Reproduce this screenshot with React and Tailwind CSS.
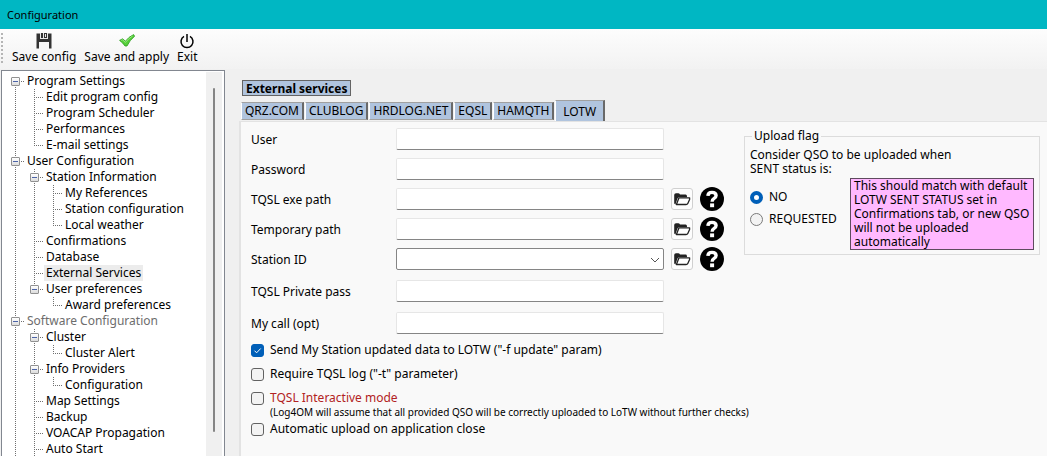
import React, { useState } from 'react'

const tree = [
  {
    label: 'Program Settings',
    children: [
      { label: 'Edit program config' },
      { label: 'Program Scheduler' },
      { label: 'Performances' },
      { label: 'E-mail settings' },
    ],
  },
  {
    label: 'User Configuration',
    children: [
      {
        label: 'Station Information',
        children: [
          { label: 'My References' },
          { label: 'Station configuration' },
          { label: 'Local weather' },
        ],
      },
      { label: 'Confirmations' },
      { label: 'Database' },
      { label: 'External Services' },
      { label: 'User preferences', children: [{ label: 'Award preferences' }] },
    ],
  },
  {
    label: 'Software Configuration',
    muted: true,
    more: true,
    children: [
      { label: 'Cluster', children: [{ label: 'Cluster Alert' }] },
      { label: 'Info Providers', children: [{ label: 'Configuration' }] },
      { label: 'Map Settings' },
      { label: 'Backup' },
      { label: 'VOACAP Propagation' },
      { label: 'Auto Start', more: true },
    ],
  },
]

const tabs = ['QRZ.COM', 'CLUBLOG', 'HRDLOG.NET', 'EQSL', 'HAMQTH', 'LOTW']

const Guide = ({ up, down, right }) => (
  <svg width="19" height="16" className="shrink-0" stroke="#6f6f6f" strokeDasharray="1 1" shapeRendering="crispEdges">
    {up && <path d="M9.5 0V8" />}
    {down && <path d="M9.5 8V16" />}
    {right && <path d="M9 8.5H18" />}
  </svg>
)

const TreeNode = ({ node, first, last, lines, selected, onSelect }) => {
  const [open, setOpen] = useState(true)
  const isSelected = selected === node.label

  return (
    <li>
      <div className="flex h-4 items-center">
        {lines.map((line, index) => (
          <Guide key={index} up={line} down={line} />
        ))}
        <div className="relative flex h-4 w-[19px] shrink-0">
          <Guide up={!first} down={!last} right />
          {node.children && (
            <button
              aria-label={`Toggle ${node.label}`}
              onClick={() => setOpen(!open)}
              className="absolute top-1 left-[5px] flex size-[9px] items-center justify-center rounded-[1px] border border-[#919191] bg-gradient-to-b from-white to-[#dcdcdc]"
            >
              <span className="h-px w-[5px] bg-[#4b63a7]" />
            </button>
          )}
        </div>
        <button
          onClick={() => onSelect(node.label)}
          className={`h-4 px-0.5 whitespace-nowrap ${isSelected ? 'bg-[#ececec]' : ''} ${
            node.muted ? 'text-[#6d6d6d]' : ''
          }`}
        >
          {node.label}
        </button>
      </div>
      {node.children && open && (
        <ul>
          {node.children.map((child, index) => (
            <TreeNode
              key={child.label}
              node={child}
              last={index === node.children.length - 1 && !child.more}
              lines={[...lines, !last]}
              selected={selected}
              onSelect={onSelect}
            />
          ))}
        </ul>
      )}
    </li>
  )
}

const FolderIcon = () => (
  <svg width="18" height="16" viewBox="0 0 18 16">
    <path d="M1.2 12.5V4Q1.2 2.2 3 2.2H5.2Q6.4 2.2 7 3.6H12.6Q14 3.6 14 5.4V6.2H6.4Q5.2 6.2 4.6 7.2L2.4 13.4Z" fill="#222" />
    <path
      d="M6 6.8H16.6V8.4L14.8 12.4Q14.3 13.5 13 13.5H3.4Z"
      fill="#fff"
      stroke="#222"
      strokeWidth="1.3"
      strokeLinejoin="round"
    />
  </svg>
)

const HelpIcon = () => (
  <svg width="24" height="24" viewBox="0 0 24 24">
    <circle cx="12" cy="12" r="12" fill="#000" />
    <path d="M7.9 8.9Q8 5.4 12 5.4T16.1 8.6Q16.1 10.4 14 11.5Q12.1 12.5 12.1 14.8" fill="none" stroke="#fff" strokeWidth="3.4" />
    <rect x="10.1" y="16.4" width="4" height="3.8" fill="#fff" />
  </svg>
)

const inputClass =
  'h-[22px] w-full min-w-0 rounded-[2px] border border-[#e6e6e6] border-b-[#858585] bg-white px-1 outline-none'

const Field = ({ id, label, type = 'text', browse, select }) => (
  <div className="flex h-[22px] items-center">
    <label htmlFor={id} className="w-[145px] shrink-0 pt-0.5">
      {label}
    </label>
    <div className="relative flex min-w-0 flex-1">
      {select ? (
        <>
          <select
            id={id}
            className="h-[22px] w-full appearance-none rounded-[2px] border border-[#858585] bg-white px-1 outline-none"
          >
            <option></option>
          </select>
          <svg
            width="10"
            height="6"
            viewBox="0 0 10 6"
            fill="none"
            stroke="#555"
            className="pointer-events-none absolute top-[9px] right-1"
          >
            <path d="M1 1L5 5L9 1" />
          </svg>
        </>
      ) : (
        <input id={id} type={type} className={inputClass} />
      )}
    </div>
    <div className="flex w-[61px] shrink-0 items-center gap-[7px] pl-[7px]">
      {browse && (
        <>
          <button
            aria-label={`Browse ${label}`}
            className="flex size-[22px] shrink-0 items-center justify-center rounded-[3px] border border-[#d0d0d0] bg-[#fdfdfd]"
          >
            <FolderIcon />
          </button>
          <button aria-label={`Help ${label}`} className="shrink-0">
            <HelpIcon />
          </button>
        </>
      )}
    </div>
  </div>
)

const Check = ({ label, defaultChecked, className = '' }) => (
  <label className={`flex h-4 w-fit items-center gap-1.5 ${className}`}>
    <span className="relative flex">
      <input
        type="checkbox"
        defaultChecked={defaultChecked}
        className="peer size-[13px] appearance-none rounded-[3px] border border-[#626262] bg-[#f3f3f3] checked:border-[#005fb8] checked:bg-[#005fb8]"
      />
      <svg
        width="13"
        height="13"
        viewBox="0 0 13 13"
        fill="none"
        stroke="#fff"
        className="pointer-events-none absolute inset-0 hidden peer-checked:block"
      >
        <path d="M3.5 6.7L5.6 8.8L9.7 4.5" />
      </svg>
    </span>
    {label}
  </label>
)

const Radio = ({ label, defaultChecked }) => (
  <label className="flex h-4 items-center gap-1.5">
    <input
      type="radio"
      name="upload-flag"
      defaultChecked={defaultChecked}
      className="size-[13px] appearance-none rounded-full border border-[#7a7a7a] bg-[#f3f3f3] checked:border-4 checked:border-[#005fb8] checked:bg-white"
    />
    {label}
  </label>
)

const ToolButton = ({ label, children }) => (
  <button className="flex flex-col items-center">
    <span className="flex h-4 items-center">{children}</span>
    <span className="leading-4">{label}</span>
  </button>
)

const Toolbar = () => (
  <div className="flex h-10 shrink-0 items-start bg-gradient-to-b from-[#fdfdfd] to-[#f2f2f2] pt-1">
    <div className="ml-px h-[30px] w-0.5 border-l-2 border-dotted border-[#b5b5b5]" />
    <div className="flex gap-2 pl-[9px]">
      <ToolButton label="Save config">
        <svg width="16" height="16" viewBox="0 0 16 16">
          <path d="M0.5 0.5H15.5V15.5H0.5Z" fill="#333" />
          <rect x="4" y="0" width="8" height="6" fill="#e8e8e8" />
          <rect x="5" y="0" width="2" height="5" fill="#333" />
          <rect x="8" y="0" width="3" height="5" fill="#333" />
          <rect x="9" y="1" width="1" height="3" fill="#e8e8e8" />
          <rect x="3" y="9" width="10" height="7" fill="#f7f7f7" />
        </svg>
      </ToolButton>
      <ToolButton label="Save and apply">
        <svg width="16" height="16" viewBox="0 0 16 16">
          <path
            d="M0.6 7.4L3.6 5.8L6.4 8.2Q9.5 4 14.6 1.6L15.6 3.2Q10.8 7 8 13H6Q4 9.8 0.6 7.4Z"
            fill="#55cf38"
            stroke="#2b9a1e"
            strokeWidth="0.8"
          />
          <path d="M2.2 7.4L3.6 6.8L6.4 9.4Q9.6 5.4 13.6 3" fill="none" stroke="#9dea86" strokeWidth="0.9" />
        </svg>
      </ToolButton>
      <ToolButton label="Exit">
        <svg width="16" height="16" viewBox="0 0 16 16" fill="none" stroke="#000" strokeWidth="1.5">
          <path d="M5 3.4A6 6 0 1 0 11 3.4" />
          <path d="M8 1V9" />
        </svg>
      </ToolButton>
    </div>
  </div>
)

const App = () => {
  const [selected, setSelected] = useState('External Services')
  const [activeTab, setActiveTab] = useState('LOTW')

  return (
    <div className="flex h-screen flex-col overflow-hidden bg-[#f0f0f0] font-['Noto_Sans',sans-serif] text-[12px] leading-4 text-black">
      <header className="flex h-[29px] shrink-0 items-center bg-[#00b7c3] px-[7px]">
        <h1 className="text-[11px]">Configuration</h1>
      </header>
      <Toolbar />

      <div className="flex min-h-0 flex-1 pt-px pl-px">
        <nav className="flex w-56 shrink-0 border border-b-0 border-[#828790] bg-white pt-px pr-0.5">
          <ul className="min-w-0 flex-1 overflow-hidden pt-px pl-1">
            {tree.map((node, index) => (
              <TreeNode
                key={node.label}
                node={node}
                first={index === 0}
                last={index === tree.length - 1 && !node.more}
                lines={[]}
                selected={selected}
                onSelect={setSelected}
              />
            ))}
          </ul>
          <div className="flex w-4 justify-center bg-[#f0f0f0] pt-4 pb-6">
            <div className="w-0.5 rounded-full bg-[#858585]" />
          </div>
        </nav>

        <main className="flex min-w-0 flex-1 flex-col pt-2.5 pl-3.5">
          <h2 className="ml-[3px] h-4 w-fit border border-[#646464] bg-[#b0c4de] px-[3px] text-[12px] leading-4 font-bold">
            External services
          </h2>
          <div role="tablist" className="mt-1 ml-0.5 flex items-end">
            {tabs.map((tab) => (
              <button
                key={tab}
                role="tab"
                aria-selected={activeTab === tab}
                onClick={() => setActiveTab(tab)}
                className={
                  activeTab === tab
                    ? 'h-[21px] border-t border-r-2 border-l border-t-[#a0a0a0] border-r-[#696969] border-l-white bg-[#b0c4de] px-[7px] pt-px'
                    : 'mr-px mb-px h-[18px] border border-r-2 border-[#a0a0a0] border-r-[#696969] border-l-white bg-[#b0c4de] px-[3px] leading-4'
                }
              >
                {tab}
              </button>
            ))}
          </div>

          <section className="min-h-0 flex-1 border-t border-l-2 border-[#e3e3e3] bg-[#f9f9f9] pt-1.5 pl-2.5">
            <div className="flex items-start gap-[19px]">
              <div className="flex w-[474px] shrink-0 flex-col gap-2.5">
                <div className="flex flex-col gap-2">
                  <Field id="user" label="User" />
                  <Field id="password" label="Password" type="password" />
                  <Field id="tqsl-path" label="TQSL exe path" browse />
                  <Field id="temp-path" label="Temporary path" browse />
                  <Field id="station-id" label="Station ID" browse select />
                </div>
                <Field id="private-pass" label="TQSL Private pass" type="password" />
                <Field id="my-call" label="My call (opt)" />
              </div>

              <fieldset className="mr-[7px] min-w-0 flex-1 border border-[#dcdcdc] px-[5px] pb-1">
                <legend className="ml-0.5 px-0.5">Upload flag</legend>
                <p className="mt-1 max-w-[210px] leading-[14px]">Consider QSO to be uploaded when SENT status is:</p>
                <div className="mt-0.5 flex items-start gap-2.5">
                  <div className="flex flex-col gap-1.5 pt-[11px]">
                    <Radio label="NO" defaultChecked />
                    <Radio label="REQUESTED" />
                  </div>
                  <p className="ml-auto w-[184px] shrink-0 border border-[#5f4b5f] bg-[#ffb9ff] pl-[3px] leading-[14px]">
                    This should match with default LOTW SENT STATUS set in Confirmations tab, or new QSO will not be
                    uploaded automatically
                  </p>
                </div>
              </fieldset>
            </div>

            <div className="mt-2 flex flex-col">
              <Check label={'Send My Station updated data to LOTW ("-f update" param)'} defaultChecked />
              <Check label={'Require TQSL log ("-t" parameter)'} className="mt-2" />
              <Check label="TQSL Interactive mode" className="mt-2 text-[#b22222]" />
              <p className="pl-[19px] text-[10px] leading-3">
                (Log4OM will assume that all provided QSO will be correctly uploaded to LoTW without further checks)
              </p>
              <Check label="Automatic upload on application close" className="mt-[3px]" />
            </div>
          </section>
        </main>
      </div>
    </div>
  )
}

export default App
